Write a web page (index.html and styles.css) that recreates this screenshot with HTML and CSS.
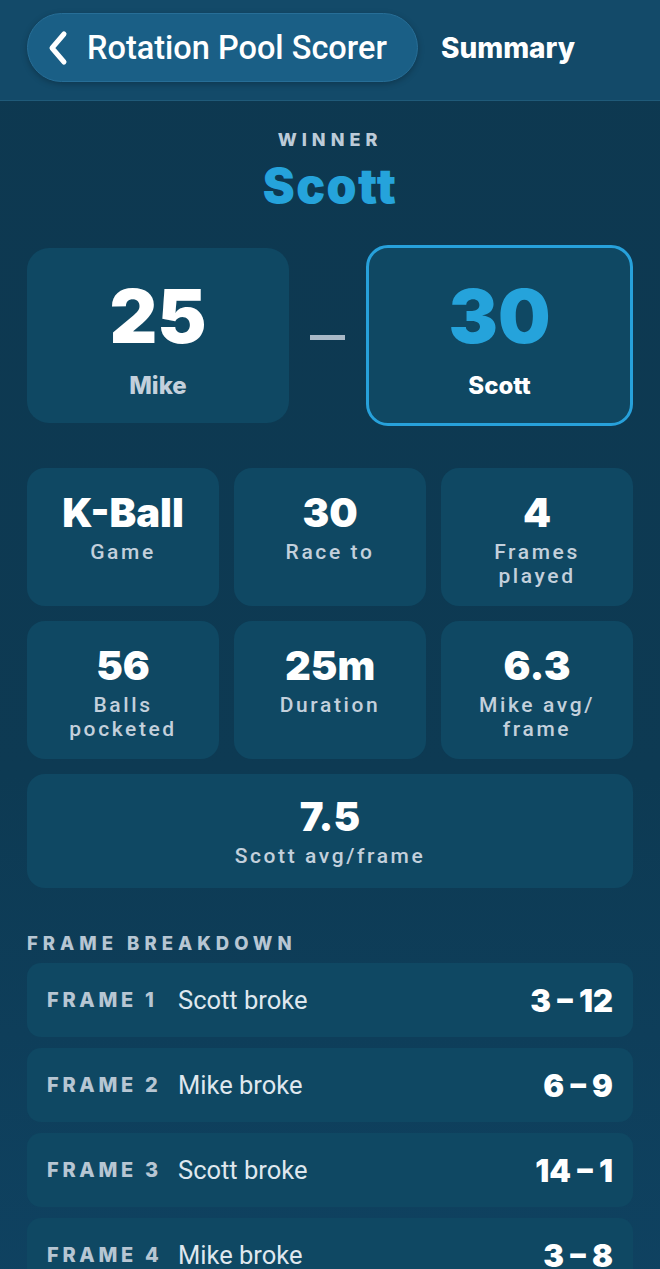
FILE: index.html
```html
<!DOCTYPE html>
<html>
<head>
<meta charset="utf-8">
<link rel="stylesheet" href="styles.css">
</head>
<body>
<header class="topbar">
  <div class="back">
    <svg class="chev" width="20" height="36" viewBox="0 0 20 36"><path d="M16 4 L4 18 L16 32" fill="none" stroke="#ffffff" stroke-width="5" stroke-linecap="round" stroke-linejoin="round"/></svg>
    <span class="back-text">Rotation Pool Scorer</span>
  </div>
  <div class="title">Summary</div>
</header>
<main class="content">
  <div class="winner-label">WINNER</div>
  <div class="winner-name">Scott</div>

  <section class="scores">
    <div class="score-card">
      <div class="score-num">25</div>
      <div class="score-name muted">Mike</div>
    </div>
    <div class="dash"></div>
    <div class="score-card win">
      <div class="score-num blue">30</div>
      <div class="score-name">Scott</div>
    </div>
  </section>

  <section class="stats">
    <div class="stat"><div class="val">K-Ball</div><div class="lbl">Game</div></div>
    <div class="stat"><div class="val">30</div><div class="lbl">Race to</div></div>
    <div class="stat"><div class="val">4</div><div class="lbl">Frames<br>played</div></div>
    <div class="stat"><div class="val">56</div><div class="lbl">Balls<br>pocketed</div></div>
    <div class="stat"><div class="val">25m</div><div class="lbl">Duration</div></div>
    <div class="stat"><div class="val">6.3</div><div class="lbl">Mike avg/<br>frame</div></div>
    <div class="stat wide"><div class="val">7.5</div><div class="lbl">Scott avg/frame</div></div>
  </section>

  <div class="section-label">FRAME BREAKDOWN</div>
  <section class="frames">
    <div class="frame"><span class="fno">FRAME 1</span><span class="fbreak">Scott broke</span><span class="fscore">3 – 12</span></div>
    <div class="frame"><span class="fno">FRAME 2</span><span class="fbreak">Mike broke</span><span class="fscore">6 – 9</span></div>
    <div class="frame"><span class="fno">FRAME 3</span><span class="fbreak">Scott broke</span><span class="fscore">14 – 1</span></div>
    <div class="frame"><span class="fno">FRAME 4</span><span class="fbreak">Mike broke</span><span class="fscore">3 – 8</span></div>
  </section>
</main>
</body>
</html>
```

FILE: styles.css
```css
* { box-sizing: border-box; }
html, body { margin: 0; padding: 0; }
body {
  width: 660px;
  min-height: 1269px;
  background: linear-gradient(180deg, #0d3850 0%, #0d3a53 60%, #0f4261 100%);
  color: #ffffff;
  font-family: Inter, "Noto Sans", sans-serif;
  overflow: hidden;
}
.topbar {
  height: 101px;
  background: #134a69;
  border-bottom: 1px solid #1f5a79;
  display: flex;
  align-items: center;
  padding: 0 27px;
  gap: 23px;
}
.back {
  height: 69px;
  margin-top: -5px;
  border-radius: 35px;
  background: #1a5f86;
  border: 1px solid #276e97;
  box-shadow: 0 2px 6px rgba(0,0,0,0.25);
  display: flex;
  align-items: center;
  padding: 0 30px 0 20px;
  gap: 19px;
}
.chev { display: block; }
.back-text {
  font-family: Roboto, sans-serif;
  font-size: 32.5px;
  font-weight: 500;
  color: #ffffff;
}
.title {
  margin-top: -5px;
  font-family: Inter, sans-serif;
  font-size: 28px;
  font-weight: 800;
  color: #ffffff;
}
.content { padding: 0 27px; }
.winner-label {
  text-align: center;
  margin-top: 28px;
  font-size: 18px;
  font-weight: 800;
  letter-spacing: 5px;
  color: #bccbd8;
  line-height: 22px;
}
.winner-name {
  text-align: center;
  margin-top: 8px;
  font-size: 48px;
  font-weight: 900;
  letter-spacing: 1.5px;
  color: #25a3db;
  line-height: 54px;
}
.scores {
  display: grid;
  grid-template-columns: 262px 1fr 267px;
  align-items: center;
  margin-top: 32px;
}
.score-card {
  height: 175px;
  border-radius: 22px;
  background: #0f4863;
  display: flex;
  flex-direction: column;
  align-items: center;
  justify-content: center;
  padding-top: 4px;
}
.score-card.win {
  height: 181px;
  border: 3px solid #27a1db;
}
.score-num {
  font-size: 74px;
  font-weight: 900;
  line-height: 80px;
  color: #ffffff;
}
.score-num.blue { color: #25a3db; }
.score-name {
  margin-top: 16px;
  font-size: 24px;
  font-weight: 800;
  line-height: 28px;
  color: #ffffff;
}
.score-name.muted { color: #c3d0dc; }
.dash {
  justify-self: center;
  width: 35px;
  height: 5px;
  background: #a9b9c7;
  margin-top: 4px;
}
.stats {
  margin-top: 42px;
  display: grid;
  grid-template-columns: repeat(3, 1fr);
  gap: 15px;
}
.stat {
  height: 138px;
  border-radius: 18px;
  background: #0f4863;
  text-align: center;
  padding-top: 23px;
}
.stat.wide {
  grid-column: 1 / -1;
  height: 114px;
  padding-top: 21px;
}
.val {
  font-size: 40px;
  font-weight: 900;
  line-height: 44px;
  color: #ffffff;
}
.lbl {
  margin-top: 5px;
  font-family: Roboto, sans-serif;
  font-size: 21px;
  font-weight: 500;
  letter-spacing: 2.6px;
  line-height: 24px;
  color: #c3d0dc;
}
.section-label {
  margin-top: 44px;
  font-size: 18.5px;
  font-weight: 800;
  letter-spacing: 5px;
  line-height: 22px;
  color: #b7c6d3;
}
.frames {
  margin-top: 9px;
  display: flex;
  flex-direction: column;
  gap: 11px;
}
.frame {
  height: 74px;
  border-radius: 14px;
  background: #0f4863;
  display: flex;
  align-items: center;
  padding: 0 20px;
}
.fno {
  font-size: 20px;
  font-weight: 800;
  letter-spacing: 3.7px;
  color: #b7c6d3;
  width: 131px;
}
.fbreak {
  font-family: Roboto, sans-serif;
  font-size: 25.5px;
  font-weight: 400;
  color: #dfe7ee;
}
.fscore {
  margin-left: auto;
  font-size: 31px;
  font-weight: 900;
  color: #ffffff;
}
```
